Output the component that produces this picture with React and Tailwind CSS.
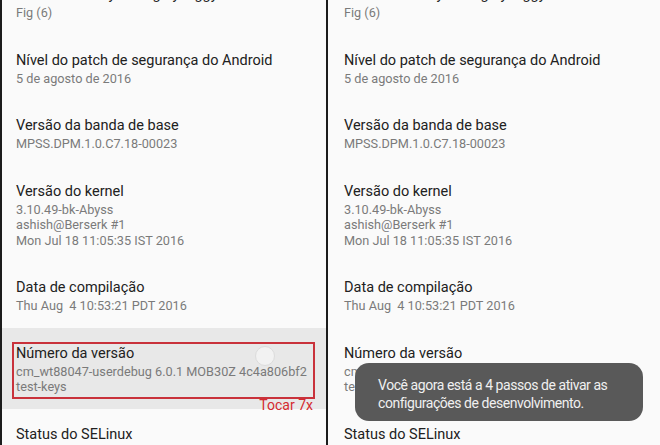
import React from 'react';

const items = [
    { title: 'Versão do Easy Config by Figgy', lines: ['Fig (6)'] },
    { title: 'Nível do patch de segurança do Android', lines: ['5 de agosto de 2016'] },
    { title: 'Versão da banda de base', lines: ['MPSS.DPM.1.0.C7.18-00023'] },
    { title: 'Versão do kernel', lines: ['3.10.49-bk-Abyss', 'ashish@Berserk #1', 'Mon Jul 18 11:05:35 IST 2016'] },
    { title: 'Data de compilação', lines: ['Thu Aug  4 10:53:21 PDT 2016'] },
    { title: 'Número da versão', lines: ['cm_wt88047-userdebug 6.0.1 MOB30Z 4c4a806bf2', 'test-keys'], build: true },
    { title: 'Status do SELinux', lines: ['Enforcing'] },
];

// Left screenshot: the build number row is pressed, with the red "tap 7x" annotation
const TapAnnotation = () => (
    <>
        {/* touch ripple */}
        <div className="absolute left-[253px] top-[18px] w-[20px] h-[20px] rounded-full bg-[#f2f2f2] border border-[#dcdcdc]" />
        <div className="absolute left-[10px] top-[14px] w-[303px] h-[57px] border-2 border-[#c9323b]" />
        <div className="absolute right-[13px] top-[69px] text-[14px] leading-[16px] text-[#d42a2f]">Tocar 7x</div>
    </>
);

// Right screenshot: toast over the build number row
const Toast = () => (
    <div className="absolute left-[25px] top-[35px] w-[288px] h-[58px] rounded-[14px] bg-[#595959] pl-[23px] pt-[13px] text-[14px] leading-[18px] text-[#f0f0f0] tracking-[-0.45px]">
        <p>Você agora está a 4 passos de ativar as</p>
        <p>configurações de desenvolvimento.</p>
    </div>
);

const Row = ({ item, pressed, toast }) => (
    <div className={item.build && pressed ? 'bg-[#e8e8e8]' : ''}>
        <div className="relative flex flex-col pl-[14px] pt-[16px] pb-[14px]">
            <span className="text-[14.5px] leading-[20px] text-[#212121] whitespace-nowrap">{item.title}</span>
            {item.lines.map((line, i) => (
                <span key={i} className="text-[12.7px] leading-[15.5px] text-[#7a7a7a] whitespace-pre">{line}</span>
            ))}
            {item.build && pressed && <TapAnnotation />}
            {item.build && toast && <Toast />}
        </div>
    </div>
);

const Panel = ({ pressed, toast, className }) => (
    <div className={`h-[445px] overflow-hidden bg-[#fafafa] ${className}`}>
        <div className="flex flex-col -mt-[31px]">
            {items.map((item, i) => (
                <Row key={i} item={item} pressed={pressed} toast={toast} />
            ))}
        </div>
    </div>
);

const App = () => {
    return (
        <div className="flex w-[660px] h-[445px] overflow-hidden bg-[#fafafa] font-['Roboto',sans-serif]">
            <Panel pressed className="w-[326px] shrink-0 border-l-2 border-[#1c1c1c]" />
            <div className="w-[2px] shrink-0 bg-[#1c1c1c]" />
            <Panel toast className="flex-1 pl-[2px]" />
        </div>
    );
};

export default App;
